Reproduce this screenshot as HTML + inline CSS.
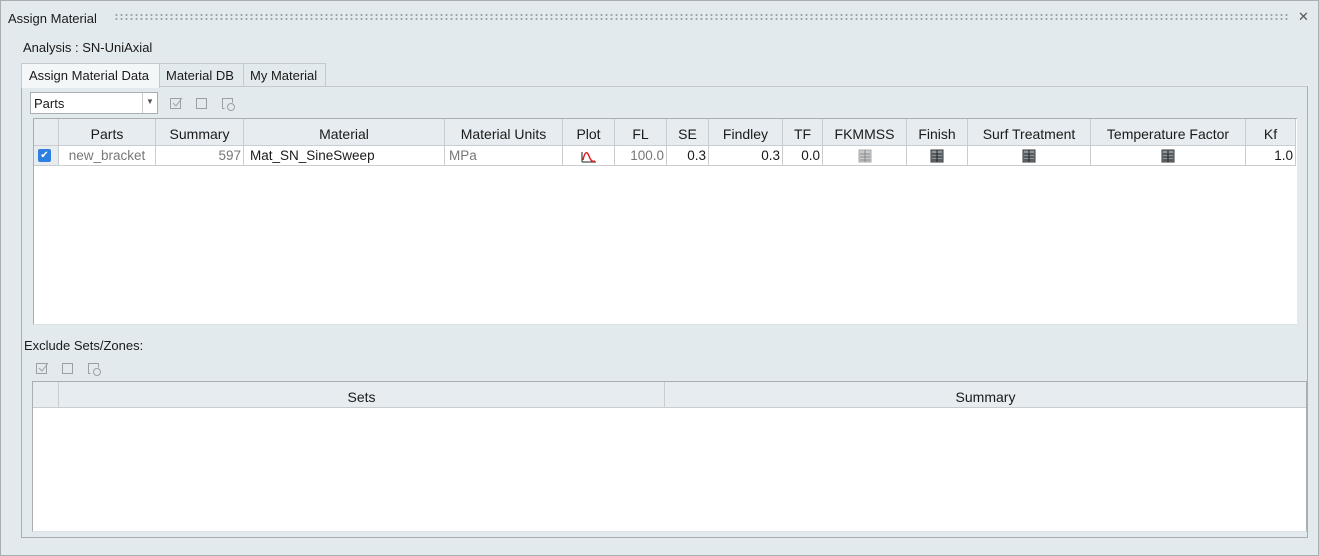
<!DOCTYPE html>
<html><head><meta charset="utf-8"><style>
*{box-sizing:border-box;margin:0;padding:0}
body{width:1319px;height:556px;background:#e3eaed;font-family:"Liberation Sans",sans-serif;font-size:14px;color:#1a1a1a;position:relative;overflow:hidden}
.a{position:absolute}
.outer{left:0;top:0;width:1319px;height:556px;border:1px solid #a9aeb1}
.c{position:absolute;top:0;height:100%;border-right:1px solid #c9cdd0;text-align:center;white-space:nowrap}
.hd .c{line-height:30px}
.rw .c{line-height:19px;font-size:13.5px}
.r{text-align:right;padding-right:2px}
.g{color:#777}
</style></head><body>
<div class="a outer"></div>
<div class="a" style="left:8px;top:11px;font-size:13px">Assign Material</div>
<div class="a" style="left:114px;top:13px;width:1176px;height:8px;background-image:radial-gradient(circle,#9aa0a4 0.9px,transparent 1.2px);background-size:5px 4px"></div>
<div class="a" style="left:1298px;top:9px;font-size:13px;color:#555">✕</div>
<div class="a" style="left:23px;top:40px;font-size:13px">Analysis : SN-UniAxial</div>
<!-- panel -->
<div class="a" style="left:21px;top:86px;width:1287px;height:452px;border:1px solid #a9aeb1;border-top-color:#c4c9cc"></div>
<!-- tabs -->
<div class="a" style="left:21px;top:63px;width:139px;height:25px;background:#f4f7f8;border:1px solid #c4c9cc;border-bottom:none;font-size:13px;line-height:23px;padding-left:7px">Assign Material Data</div>
<div class="a" style="left:159px;top:63px;width:85px;height:24px;border:1px solid #c4c9cc;border-bottom:none;font-size:13px;line-height:23px;padding-left:6px">Material DB</div>
<div class="a" style="left:243px;top:63px;width:83px;height:24px;border:1px solid #c4c9cc;border-bottom:none;font-size:13px;line-height:23px;padding-left:6px">My Material</div>
<!-- combo -->
<div class="a" style="left:30px;top:92px;width:128px;height:22px;background:#fff;border:1px solid #a9aeb1;font-size:13px;line-height:22px;padding-left:3px">Parts</div>
<div class="a" style="left:142px;top:93px;width:1px;height:20px;background:#c9cdd0"></div>
<div class="a" style="left:146px;top:97px;font-size:8px;color:#555">▼</div>
<!-- toolbar icons -->
<svg class="a" style="left:168px;top:95px" width="70" height="16"><g fill="none" stroke="#9aa0a4"><rect x="2.5" y="3.5" width="10" height="10"/><path d="M5 8l3 3 6-8"/><rect x="28.5" y="3.5" width="10" height="10"/><path d="M56.5 13.5h-2v-10h10v4"/><circle cx="63" cy="12" r="3.5"/></g></svg>
<!-- top table -->
<div class="a" style="left:33px;top:118px;width:1264px;height:207px;background:#fff;border:1px solid #a9aeb1;border-right:none;border-bottom-color:#dde1e3"></div>
<div class="a hd" style="left:34px;top:119px;width:1262px;height:27px;background:#e6ecef;border-bottom:1px solid #c9cdd0">
<div class="c" style="left:0;width:25px"></div>
<div class="c" style="left:25px;width:97px">Parts</div>
<div class="c" style="left:122px;width:88px">Summary</div>
<div class="c" style="left:210px;width:201px">Material</div>
<div class="c" style="left:411px;width:118px">Material Units</div>
<div class="c" style="left:529px;width:52px">Plot</div>
<div class="c" style="left:581px;width:52px">FL</div>
<div class="c" style="left:633px;width:42px">SE</div>
<div class="c" style="left:675px;width:74px">Findley</div>
<div class="c" style="left:749px;width:40px">TF</div>
<div class="c" style="left:789px;width:84px">FKMMSS</div>
<div class="c" style="left:873px;width:61px">Finish</div>
<div class="c" style="left:934px;width:123px">Surf Treatment</div>
<div class="c" style="left:1057px;width:155px">Temperature Factor</div>
<div class="c" style="left:1212px;width:50px">Kf</div>
</div>
<div class="a rw" style="left:34px;top:146px;width:1262px;height:20px;border-bottom:1px solid #c9cdd0">
<div class="c" style="left:0;width:25px;background:#e6ecef"><div style="position:absolute;left:4px;top:3px;width:13px;height:13px;background:#2f7fe0;border-radius:2px;color:#fff;font-size:10px;line-height:13px">✔</div></div>
<div class="c g" style="left:25px;width:97px">new_bracket</div>
<div class="c r g" style="left:122px;width:88px">597</div>
<div class="c" style="left:210px;width:201px;text-align:left;padding-left:6px">Mat_SN_SineSweep</div>
<div class="c g" style="left:411px;width:118px;text-align:left;padding-left:4px">MPa</div>
<div class="c" style="left:529px;width:52px"><svg width="18" height="14" style="margin-top:3px"><path d="M2 13V3M2 13h14" stroke="#222" fill="none"/><path d="M3 11C5 2 7 2 9 7s3 6 6 5" stroke="#d22" stroke-width="1.5" fill="none"/></svg></div>
<div class="c r g" style="left:581px;width:52px">100.0</div>
<div class="c r" style="left:633px;width:42px">0.3</div>
<div class="c r" style="left:675px;width:74px">0.3</div>
<div class="c r" style="left:749px;width:40px">0.0</div>
<div class="c" style="left:789px;width:84px"><svg width="14" height="14" style="margin-top:3px"><rect x="1" y="1" width="12" height="12" fill="#c7cbce" stroke="#aaa"/><path d="M7 1v12M2 5h10M2 8h10M2 11h10" stroke="#888"/></svg></div>
<div class="c" style="left:873px;width:61px"><svg width="14" height="14" style="margin-top:3px"><rect x="1" y="1" width="12" height="12" fill="#8d959b" stroke="#333"/><path d="M7 1v12M2 5h10M2 8h10M2 11h10" stroke="#222"/></svg></div>
<div class="c" style="left:934px;width:123px"><svg width="14" height="14" style="margin-top:3px"><rect x="1" y="1" width="12" height="12" fill="#8d959b" stroke="#333"/><path d="M7 1v12M2 5h10M2 8h10M2 11h10" stroke="#222"/></svg></div>
<div class="c" style="left:1057px;width:155px"><svg width="14" height="14" style="margin-top:3px"><rect x="1" y="1" width="12" height="12" fill="#8d959b" stroke="#333"/><path d="M7 1v12M2 5h10M2 8h10M2 11h10" stroke="#222"/></svg></div>
<div class="c r" style="left:1212px;width:50px">1.0</div>
</div>
<!-- exclude -->
<div class="a" style="left:24px;top:338px;font-size:13px">Exclude Sets/Zones:</div>
<svg class="a" style="left:34px;top:360px" width="70" height="16"><g fill="none" stroke="#9aa0a4"><rect x="2.5" y="3.5" width="10" height="10"/><path d="M5 8l3 3 6-8"/><rect x="28.5" y="3.5" width="10" height="10"/><path d="M56.5 13.5h-2v-10h10v4"/><circle cx="63" cy="12" r="3.5"/></g></svg>
<div class="a" style="left:32px;top:381px;width:1275px;height:151px;background:#fff;border:1px solid #a9aeb1;border-bottom-color:#dde1e3"></div>
<div class="a hd" style="left:33px;top:382px;width:1273px;height:26px;background:#e6ecef;border-bottom:1px solid #c9cdd0;font-size:14px">
<div class="c" style="left:0;width:26px;line-height:26px"></div>
<div class="c" style="left:26px;width:606px;line-height:31px">Sets</div>
<div class="c" style="left:632px;width:641px;line-height:31px;border-right:none">Summary</div>
</div>
</body></html>
